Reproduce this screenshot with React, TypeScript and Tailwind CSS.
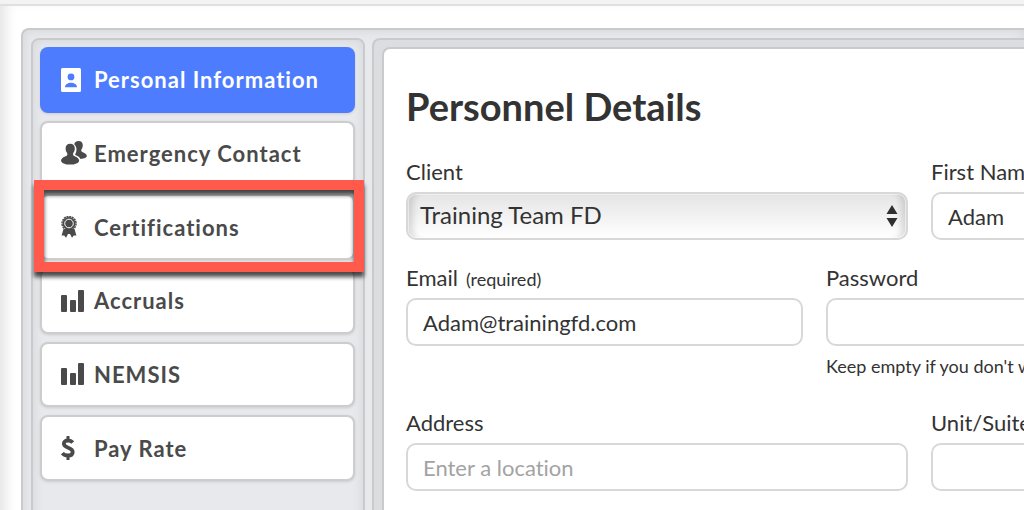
import type { InputHTMLAttributes, ReactNode } from 'react';
import clsx from 'clsx';

interface IconProps {
  className?: string;
}

function ContactIcon({ className }: IconProps) {
  return (
    <svg viewBox="0 0 20 24" className={clsx('h-6 w-5', className)} fill="currentColor" aria-hidden="true">
      <path
        fillRule="evenodd"
        d="M1.500 0h17A1.500 1.500 0 0 1 20 1.500v21a1.500 1.500 0 0 1-1.500 1.500h-17A1.500 1.500 0 0 1 0 22.500v-21A1.500 1.500 0 0 1 1.500 0zM10 5.500a3.400 3.400 0 1 0 0 6.800 3.400 3.400 0 0 0 0-6.800zM4 19.200h12c0-2.600-2.900-4.400-6-4.400s-6 1.800-6 4.400z"
      />
    </svg>
  );
}

function PeopleIcon({ className }: IconProps) {
  return (
    <svg viewBox="0 0 26 24" className={clsx('h-6 w-[26px]', className)} fill="currentColor" aria-hidden="true">
      <path d="M13.200 3.200C13.800 1 15.400 0 17.500 0c2.900 0 4.500 1.800 4.300 4.600-.1 1.500-.5 2.700-1.200 3.700-.5.8-.5 1.700 0 2.300.8 1 4.700 1.600 5.200 4.200.3 1.700-2.300 3-6.300 3.200-.9-1.900-2.400-2.800-4.600-3.700-.8-.3-.9-1-.4-1.900 1.300-2.300 1.700-6.700-1.300-9.200z" />
      <path d="M9.200 2.700c3 0 4.800 2 4.600 5-.1 1.700-.6 3-1.400 4.100-.6.9-.5 2 .1 2.600 1.200 1.100 5.100 1.500 5.600 5 .3 2.300-4 4.200-9 4.200S-.2 21.700.1 19.400c.5-3.500 4.600-3.900 5.800-5 .6-.6.7-1.700.1-2.600-.8-1.100-1.300-2.400-1.400-4.100-.2-3 1.600-5 4.600-5z" />
    </svg>
  );
}

function RibbonIcon({ className }: IconProps) {
  return (
    <svg viewBox="0 0 16 22" className={clsx('h-[22px] w-4', className)} fill="currentColor" aria-hidden="true">
      <path d="M2.500 13 .6 19.600l2.600-.2 1.800 2.300 2-3.700h2l2 3.700 1.800-2.300 2.600.2L13.500 13z" />
      <circle cx="8" cy="7.500" r="6.500" />
      <circle cx="8" cy="7.500" r="7" fill="none" stroke="currentColor" strokeWidth="1.500" strokeDasharray="2 .75" />
      <circle cx="8" cy="7.500" r="4.300" fill="none" stroke="#fff" strokeWidth="1" />
    </svg>
  );
}

function BarsIcon({ className }: IconProps) {
  return (
    <svg viewBox="0 0 24 22" className={clsx('h-[22px] w-6', className)} fill="currentColor" aria-hidden="true">
      <rect x="0" y="5" width="6" height="17" rx="1" />
      <rect x="9" y="10" width="6" height="12" rx="1" />
      <rect x="17" y="0" width="6" height="22" rx="1" />
    </svg>
  );
}

function DollarIcon({ className }: IconProps) {
  return (
    <svg viewBox="0 0 14 24" className={clsx('h-6 w-[14px]', className)} fill="none" stroke="currentColor" aria-hidden="true">
      <path strokeWidth="3" d="M7 0v4M7 20v4" />
      <path
        strokeWidth="3.800"
        d="M11.800 6.600C10.600 5.200 9 4.500 7 4.500c-2.800 0-4.200 1.300-4.200 3.100 0 5 8.900 3.300 8.900 8.300 0 2.300-1.700 3.600-4.700 3.600-2.400 0-4.400-.8-5.700-2.400"
      />
    </svg>
  );
}

const NAV_ITEMS = [
  { label: 'Personal Information', Icon: ContactIcon, active: true },
  { label: 'Emergency Contact', Icon: PeopleIcon },
  { label: 'Certifications', Icon: RibbonIcon, highlighted: true },
  { label: 'Accruals', Icon: BarsIcon },
  { label: 'NEMSIS', Icon: BarsIcon },
  { label: 'Pay Rate', Icon: DollarIcon },
];

function Sidebar() {
  return (
    <nav className="w-[334px] shrink-0 rounded-lg border-2 border-[#c9caca] bg-[#e8e9ed] py-[7px] pr-2 pl-[7px] shadow-[inset_0_0_12px_rgba(0,0,0,0.09)]">
      <ul className="grid h-[434px] grid-rows-6 gap-2">
        {NAV_ITEMS.map(({ label, Icon, active, highlighted }) => (
          <li key={label} className="relative">
            <button
              type="button"
              className={clsx(
                'flex h-full w-full items-center rounded-lg text-left text-[22px] font-bold tracking-[1px] shadow-[0_1px_3px_rgba(0,0,0,0.12)]',
                active
                  ? 'bg-[#4d7cfe] pl-[21px] text-white'
                  : 'border-2 border-[#cdcdcd] bg-white pl-[19px] text-[#4a4a4a]',
              )}
            >
              <span className="flex w-[33px] shrink-0">
                <Icon />
              </span>
              {label}
            </button>
            {highlighted && (
              <span className="pointer-events-none absolute -top-[14px] -right-[9px] -bottom-3 -left-1.5 z-10 border-10 border-[#ff5a4c] drop-shadow-[0_5px_2px_rgba(0,0,0,0.7)]" />
            )}
          </li>
        ))}
      </ul>
    </nav>
  );
}

const FIELD_STYLES = 'h-12 w-full rounded-[10px] border-2 border-[#d8d8d8] text-[#333]';

interface FieldProps {
  id: string;
  label: string;
  note?: string;
  hint?: string;
  className?: string;
  children: ReactNode;
}

function Field({ id, label, note, hint, className, children }: FieldProps) {
  return (
    <div className={className}>
      <label htmlFor={id} className="mb-[5px] block h-[30px] text-[22px] leading-[30px] whitespace-nowrap">
        {label}
        {note && <span className="ml-2 text-[18px]">{note}</span>}
      </label>
      {children}
      {hint && <p className="mt-2 text-[18px] leading-6">{hint}</p>}
    </div>
  );
}

function TextInput(props: InputHTMLAttributes<HTMLInputElement>) {
  return (
    <input
      className={clsx(
        FIELD_STYLES,
        'bg-white px-[15px] text-[22px] [font-variant-ligatures:none] placeholder:text-[#a3a3a3]',
      )}
      {...props}
    />
  );
}

function DetailsForm() {
  return (
    <form className="grid min-w-[1027px] grid-cols-10 gap-x-[23px]">
      <Field id="client" label="Client" className="col-span-5 mb-[23px]">
        <div className="relative">
          <select
            id="client"
            className={clsx(
              FIELD_STYLES,
              'appearance-none bg-linear-to-b from-[#e5e5e5] to-white px-3 pb-0.5 text-2xl shadow-[inset_0_0_0_1px_rgba(255,255,255,0.5),inset_9px_0_6px_-4px_rgba(0,0,0,0.13),inset_-9px_0_6px_-4px_rgba(0,0,0,0.13)]',
            )}
          >
            <option>Training Team FD</option>
          </select>
          <svg viewBox="0 0 12 22" className="pointer-events-none absolute top-[13px] right-[10px] h-[22px] w-3" fill="#303030" aria-hidden="true">
            <path d="M6 0l5.500 9H.5zM6 22l5.500-9H.5z" />
          </svg>
        </div>
      </Field>
      <Field id="first-name" label="First Name" className="col-span-5 mb-[23px]">
        <TextInput id="first-name" type="text" defaultValue="Adam" />
      </Field>
      <Field id="email" label="Email" note="(required)" className="col-span-4">
        <TextInput id="email" type="email" defaultValue="Adam@trainingfd.com" />
      </Field>
      <Field
        id="password"
        label="Password"
        hint="Keep empty if you don't want to change it"
        className="col-span-4 mb-[30px]"
      >
        <TextInput id="password" type="password" />
      </Field>
      <Field id="address" label="Address" className="col-span-5 mb-[23px]">
        <TextInput id="address" type="text" placeholder="Enter a location" />
      </Field>
      <Field id="unit" label="Unit/Suite" className="col-span-5 mb-[23px]">
        <TextInput id="unit" type="text" />
      </Field>
    </form>
  );
}

export default function App() {
  return (
    <div className="flex h-screen flex-col overflow-hidden bg-white font-['Lato',sans-serif] text-[#333]">
      <header className="h-1.5 shrink-0 border-b-2 border-[#e0e0e0] bg-[#f3f3f3]" />
      <main className="flex flex-1 pt-[22px] pl-[21px] shadow-[inset_12px_0_12px_-6px_rgba(0,0,0,0.1)]">
        <div className="flex min-h-[640px] min-w-0 flex-1 gap-[7px] rounded-tl-lg border-t-2 border-l-2 border-[#c9caca] bg-[#e8e9ed] py-2 pl-2 shadow-[inset_0_0_12px_rgba(0,0,0,0.09)]">
          <Sidebar />
          <section className="min-w-0 flex-1 rounded-tl-lg border-t-2 border-l-2 border-[#c9caca] bg-[#dcdde1] pt-[7px] pl-2">
            <div className="h-full rounded-tl-lg border-t-2 border-l-2 border-[#c9caca] bg-white pt-[34px] pl-[22px]">
              <h1 className="mb-7 text-[38px] leading-[46px] font-bold">Personnel Details</h1>
              <DetailsForm />
            </div>
          </section>
        </div>
      </main>
    </div>
  );
}
